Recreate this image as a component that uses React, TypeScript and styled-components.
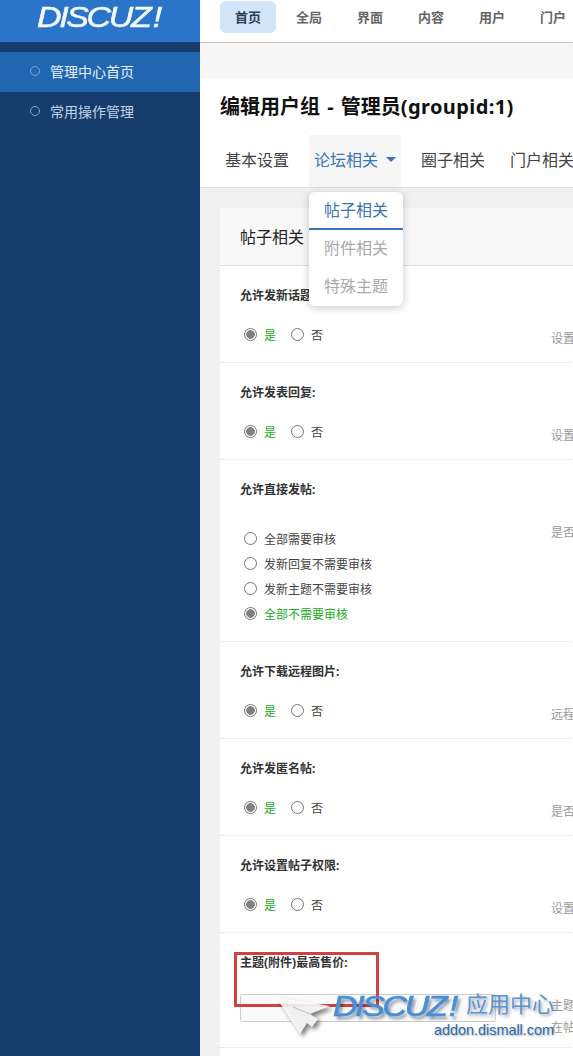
import React, { FC } from 'react'
import styled, { createGlobalStyle } from 'styled-components'

const GlobalStyle = createGlobalStyle`
  html, body {
    margin: 0;
    padding: 0;
    height: 1056px;
    overflow: hidden;
    background: #fff;
    font-family: "Noto Sans", "Noto Sans CJK SC", sans-serif;
  }
  * {
    box-sizing: border-box;
  }
`

const Page = styled.div`
  position: relative;
  display: flex;
  width: 573px;
  height: 1056px;
  overflow: hidden;
`

const Sidebar = styled.aside`
  display: flex;
  flex-direction: column;
  flex: 0 0 200px;
  background: #163d6b;
`

const LogoBar = styled.div`
  display: flex;
  align-items: center;
  justify-content: center;
  height: 42px;
  margin-bottom: 10px;
  background: #2a74c9;
`

const LogoText = styled.span`
  display: block;
  margin: -8px 0 0 -2px;
  color: #f4f9fe;
  font: italic 400 29px/32px "Liberation Sans", sans-serif;
  letter-spacing: -2px;
  -webkit-text-stroke: 0.5px #f4f9fe;
  transform: scaleX(1.17);
`

const Bang = styled.span`
  margin-left: 3px;
`

const SideItem = styled.div<{ $active?: boolean }>`
  display: flex;
  align-items: center;
  gap: 10px;
  height: 40px;
  padding: 0 0 2px 30px;
  font-size: 14px;
  color: ${(p) => (p.$active ? '#e8f1fb' : '#c3d2e4')};
  background: ${(p) => (p.$active ? '#2166b1' : 'transparent')};
`

const SideDot = styled.i`
  width: 10px;
  height: 10px;
  border: 1px solid #7ea6d8;
  border-radius: 50%;
`

const Main = styled.main`
  display: flex;
  flex-direction: column;
  flex: 1;
  min-width: 0;
  overflow: hidden;
`

const TopNav = styled.nav`
  display: flex;
  gap: 5px;
  flex: 0 0 43px;
  padding: 1px 0 0 20px;
  background: #fff;
  border-bottom: 1px solid #d3d3d3;
`

const TopItem = styled.a<{ $active?: boolean }>`
  flex: 0 0 56px;
  height: 32px;
  font-size: 13px;
  font-weight: 700;
  line-height: 32px;
  text-align: center;
  color: ${(p) => (p.$active ? '#2c3e50' : '#666')};
  background: ${(p) => (p.$active ? '#d2e4f8' : 'transparent')};
  border-radius: 6px;
`

const CrumbBar = styled.div`
  flex: 0 0 35px;
  background: #f6f6f6;
  box-shadow: 0 1px 3px rgba(0, 0, 0, 0.3);
`

const Title = styled.h1`
  flex: 0 0 57px;
  margin: 0;
  padding: 15px 0 0 20px;
  font-size: 20px;
  font-weight: 700;
  line-height: 28px;
  word-spacing: 2px;
  white-space: nowrap;
  color: #111;
  background: #fff;
`

const TitleCode = styled.span`
  letter-spacing: 0.4px;
`

const Tabs = styled.div`
  display: flex;
  gap: 15px;
  flex: 0 0 53px;
  padding-left: 20px;
  background: #fff;
  border-bottom: 1px solid #ddd;
`

const Tab = styled.a<{ $active?: boolean }>`
  display: flex;
  align-items: center;
  flex: none;
  height: 52px;
  padding: 0 5px 4px;
  font-size: 16px;
  color: ${(p) => (p.$active ? '#3a74b4' : '#444')};
  background: ${(p) => (p.$active ? '#f6f6f6' : 'transparent')};
`

const Caret = styled.i`
  width: 0;
  height: 0;
  margin-left: 8px;
  border-top: 5px solid #3a74b4;
  border-left: 5px solid transparent;
  border-right: 5px solid transparent;
`

const Dropdown = styled.div`
  position: absolute;
  top: 192px;
  left: 309px;
  z-index: 2;
  width: 94px;
  height: 114px;
  background: #fff;
  border-radius: 6px;
  box-shadow: 0 2px 8px rgba(0, 0, 0, 0.22);
`

const DropItem = styled.div<{ $active?: boolean }>`
  height: 38px;
  font-size: 16px;
  line-height: 37px;
  text-align: center;
  color: ${(p) => (p.$active ? '#3a74b4' : '#aaa')};
  border-bottom: ${(p) => (p.$active ? '2px solid #3a74b4' : 'none')};
`

const Content = styled.div`
  flex: 1;
  padding: 20px 0 0 20px;
  background: #f0f0f0;
`

const Card = styled.section`
  width: 420px;
  min-height: 900px;
  background: #fff;
`

const CardHead = styled.div`
  height: 58px;
  padding-left: 20px;
  font-size: 16px;
  line-height: 59px;
  color: #222;
  background: #f8f8f8;
  border-bottom: 1px solid #ddd;
`

const Row = styled.div`
  padding: 21px 0 15px 20px;
  border-bottom: 1px dotted #ddd;
`

const RowLabel = styled.div`
  height: 18px;
  margin-bottom: 17px;
  font-size: 12px;
  font-weight: 700;
  line-height: 18px;
  color: #333;
`

const RowBody = styled.div`
  display: flex;
`

const Control = styled.div`
  flex: 0 0 311px;
`

const RadioLine = styled.div`
  display: flex;
  align-items: center;
  height: 25px;
`

const RadioList = styled.div`
  padding-top: 10px;
`

const RadioItem = styled.label<{ $on?: boolean }>`
  display: flex;
  align-items: center;
  margin-right: 11px;
  font-size: 12px;
  color: ${(p) => (p.$on ? '#22aa22' : '#444')};
`

const RadioInput = styled.input.attrs({ type: 'radio', readOnly: true })`
  appearance: none;
  width: 13px;
  height: 13px;
  margin: 0 7px 0 4px;
  background: #fff;
  border: 1px solid #767676;
  border-radius: 50%;

  &:checked {
    background: radial-gradient(circle, #808080 0 4px, #fff 4.6px);
  }
`

// the note hangs below the control, so only the control sets the row height
const Note = styled.div`
  margin: 6px 0 -30px;
  font-size: 12px;
  line-height: 22px;
  white-space: nowrap;
  color: #999;
`

const TextInput = styled.input`
  display: block;
  width: 256px;
  height: 28px;
  margin-top: 5px;
  background: #fafafa;
  border: 1px solid #ccc;
  border-radius: 3px;
`

const PriceRow = styled(Row)`
  padding-bottom: 25px;
`

const RedBox = styled.div`
  position: absolute;
  top: 952px;
  left: 234px;
  z-index: 3;
  width: 145px;
  height: 55px;
  border: 3px solid #d2403f;
`

const Watermark = styled.div`
  position: absolute;
  top: 985px;
  left: 270px;
  z-index: 4;
  width: 303px;
  height: 60px;
  pointer-events: none;
`

const MarkCursor = styled.svg`
  position: absolute;
  top: 10px;
  left: 4px;
  filter: drop-shadow(3px 3px 2px rgba(0, 0, 0, 0.55));
`

const MarkLogo = styled.span`
  position: absolute;
  top: 5px;
  left: 72px;
  color: #4a8fd6;
  font: italic 400 29px/32px "Liberation Sans", sans-serif;
  letter-spacing: -2px;
  -webkit-text-stroke: 0.7px #4a8fd6;
  text-shadow: 2px 3px 3px rgba(20, 40, 70, 0.55);
  transform: scaleX(1.17);
`

const MarkCn = styled.span`
  position: absolute;
  top: 2px;
  left: 196px;
  color: #5b93cf;
  font-size: 22px;
  line-height: 32px;
  text-shadow: 2px 2px 3px rgba(20, 40, 70, 0.4);
`

const MarkUrl = styled.span`
  position: absolute;
  top: 35px;
  left: 164px;
  color: #2f6aa8;
  font: 400 14.4px/20px "Liberation Sans", sans-serif;
  text-shadow: 1px 1px 2px rgba(20, 40, 70, 0.4);
`

type Opt = { text: string; on?: boolean }

const YesNo: FC = () => (
  <RadioLine>
    <RadioItem $on>
      <RadioInput defaultChecked />
      是
    </RadioItem>
    <RadioItem>
      <RadioInput />
      否
    </RadioItem>
  </RadioLine>
)

const rows = [
  { label: '允许发新话题:', note: '设置' },
  { label: '允许发表回复:', note: '设置' },
  { label: '允许直接发帖:', note: '是否', options: true },
  { label: '允许下载远程图片:', note: '远程' },
  { label: '允许发匿名帖:', note: '是否' },
  { label: '允许设置帖子权限:', note: '设置' },
]

const auditOptions: Opt[] = [
  { text: '全部需要审核' },
  { text: '发新回复不需要审核' },
  { text: '发新主题不需要审核' },
  { text: '全部不需要审核', on: true },
]

export default function App() {
  return (
    <Page>
      <GlobalStyle />
      <Sidebar>
        <LogoBar>
          <LogoText>
            DISCUZ<Bang>!</Bang>
          </LogoText>
        </LogoBar>
        <SideItem $active>
          <SideDot />
          管理中心首页
        </SideItem>
        <SideItem>
          <SideDot />
          常用操作管理
        </SideItem>
      </Sidebar>
      <Main>
        <TopNav>
          <TopItem $active>首页</TopItem>
          <TopItem>全局</TopItem>
          <TopItem>界面</TopItem>
          <TopItem>内容</TopItem>
          <TopItem>用户</TopItem>
          <TopItem>门户</TopItem>
        </TopNav>
        <CrumbBar />
        <Title>
          编辑用户组 - 管理员<TitleCode>(groupid:1)</TitleCode>
        </Title>
        <Tabs>
          <Tab>基本设置</Tab>
          <Tab $active>
            论坛相关
            <Caret />
          </Tab>
          <Tab>圈子相关</Tab>
          <Tab>门户相关</Tab>
        </Tabs>
        <Content>
          <Card>
            <CardHead>帖子相关</CardHead>
            {rows.map((row) => (
              <Row key={row.label}>
                <RowLabel>{row.label}</RowLabel>
                <RowBody>
                  <Control>
                    {row.options ? (
                      <RadioList>
                        {auditOptions.map((opt) => (
                          <RadioLine key={opt.text}>
                            <RadioItem $on={opt.on}>
                              <RadioInput defaultChecked={opt.on} />
                              {opt.text}
                            </RadioItem>
                          </RadioLine>
                        ))}
                      </RadioList>
                    ) : (
                      <YesNo />
                    )}
                  </Control>
                  <Note>{row.note}</Note>
                </RowBody>
              </Row>
            ))}
            <PriceRow>
              <RowLabel>主题(附件)最高售价:</RowLabel>
              <RowBody>
                <Control>
                  <TextInput />
                </Control>
                <Note>
                  主题
                  <br />
                  在帖
                </Note>
              </RowBody>
            </PriceRow>
          </Card>
        </Content>
      </Main>
      <Dropdown>
        <DropItem $active>帖子相关</DropItem>
        <DropItem>附件相关</DropItem>
        <DropItem>特殊主题</DropItem>
      </Dropdown>
      <RedBox />
      <Watermark>
        <MarkCursor width="64" height="46" viewBox="0 0 64 46">
          <path d="M2 2 L56 11 L36 19 L44 24 L38 32 L33 28 L26 39 Z" fill="#ffffff" fillOpacity="0.88" />
          <path d="M19 12 L36 19" stroke="#bbb" strokeWidth="1" fill="none" />
        </MarkCursor>
        <MarkLogo>
          DISCUZ<Bang>!</Bang>
        </MarkLogo>
        <MarkCn>应用中心</MarkCn>
        <MarkUrl>addon.dismall.com</MarkUrl>
      </Watermark>
    </Page>
  )
}
